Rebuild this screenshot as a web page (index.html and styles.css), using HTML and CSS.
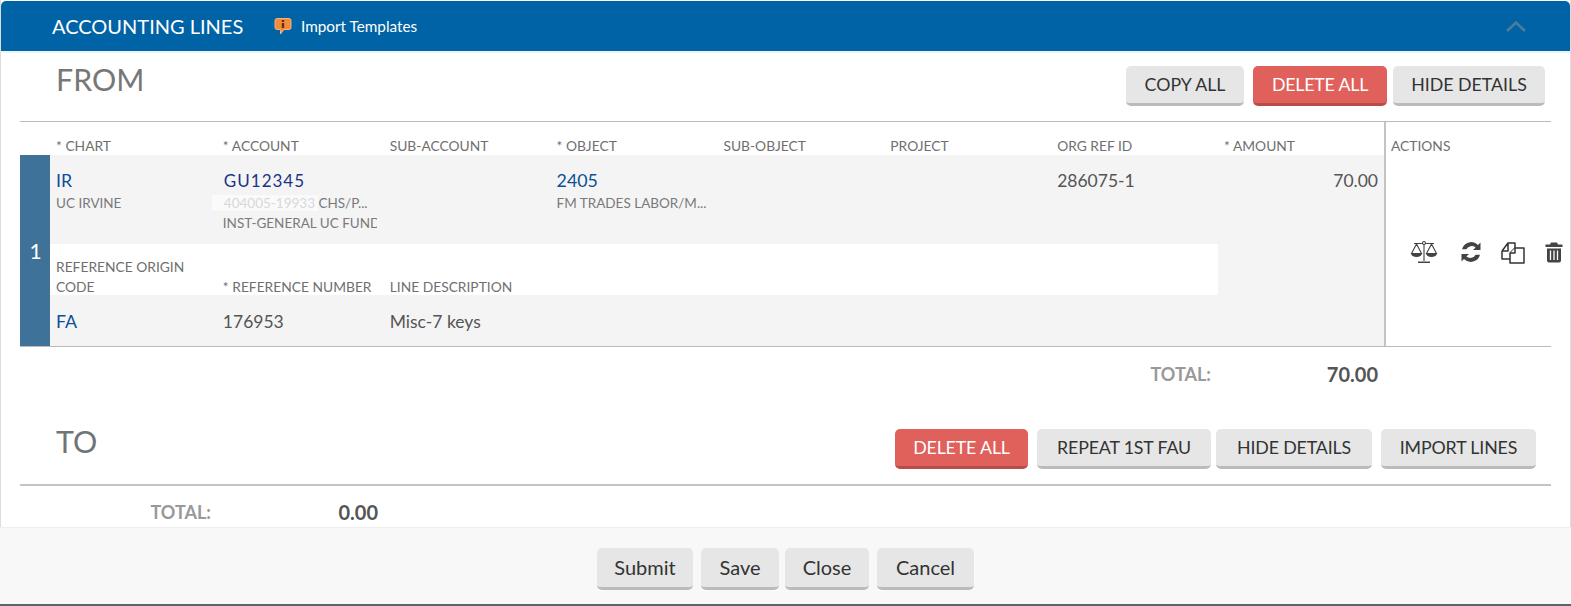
FILE: index.html
```html
<!DOCTYPE html>
<html lang="en">
<head>
<meta charset="utf-8">
<title>Accounting Lines</title>
<link rel="stylesheet" href="styles.css">
</head>
<body>
<div class="page">
  <section class="panel">
    <header class="panel-head">
      <h2 class="panel-title">ACCOUNTING LINES</h2>
      <a class="import-link">
        <svg class="info-icon" viewBox="0 0 18 18" width="18" height="18">
          <path d="M3 1.500h12a2 2 0 0 1 2 2v7a2 2 0 0 1-2 2h-5l-3.500 4.500v-4.500h-3.500a2 2 0 0 1-2-2v-7a2 2 0 0 1 2-2z" fill="#f08c3c" stroke="#f6b27a" stroke-width="1"/>
          <rect x="7.800" y="3" width="2.400" height="2" fill="#6b2f10"/>
          <rect x="7.800" y="6" width="2.400" height="5" fill="#6b2f10"/>
        </svg>
        Import Templates
      </a>
      <svg class="chevron" viewBox="0 0 20 11" width="20" height="11"><path d="M1 10l9-8.500 9 8.500" fill="none" stroke="#4b7c98" stroke-width="2.600"/></svg>
    </header>

    <div class="section-head from-head">
      <h3 class="section-title">FROM</h3>
      <div class="btn-row from-btns">
        <button class="btn w-copy">COPY ALL</button>
        <button class="btn btn-red w-del">DELETE ALL</button>
        <button class="btn w-hide">HIDE DETAILS</button>
      </div>
    </div>

    <div class="lines">
      <div class="lines-main">
        <div class="labels">
          <span>* CHART</span><span>* ACCOUNT</span><span>SUB-ACCOUNT</span><span>* OBJECT</span><span>SUB-OBJECT</span><span>PROJECT</span><span>ORG REF ID</span><span>* AMOUNT</span>
        </div>
        <div class="line">
          <div class="line-num">1</div>
          <div class="fields">
            <div class="fields-top">
              <div class="cell"><a class="link">IR</a><div class="sub">UC IRVINE</div></div>
              <div class="cell">
                <a class="link acct">GU12345</a>
                <div class="sub masked-line"><span class="masked">404005-19933</span> CHS/P...</div>
                <div class="sub clip">INST-GENERAL UC FUND</div>
              </div>
              <div class="cell"></div>
              <div class="cell"><a class="link">2405</a><div class="sub">FM TRADES LABOR/M...</div></div>
              <div class="cell"></div>
              <div class="cell"></div>
              <div class="cell"><span class="val">286075-1</span></div>
            </div>
            <div class="fields-labels">
              <span>REFERENCE ORIGIN CODE</span><span>* REFERENCE NUMBER</span><span>LINE DESCRIPTION</span>
            </div>
            <div class="fields-bottom">
              <div class="cell"><a class="link">FA</a></div>
              <div class="cell"><span class="val">176953</span></div>
              <div class="cell"><span class="val">Misc-7 keys</span></div>
            </div>
          </div>
          <div class="amount"><span class="val">70.00</span></div>
        </div>
      </div>
      <div class="actions">
        <div class="actions-label">ACTIONS</div>
        <div class="action-icons">
          <svg class="ic-scale" viewBox="0 0 28 24" width="28" height="24">
            <g fill="none" stroke="#444" stroke-width="1.100">
              <path d="M14 3v18M4 3.500h20"/>
              <circle cx="14" cy="3" r="1.500" fill="#fff"/>
              <path d="M6.500 4l-5 9.500h10zM21.500 4l-5 9.500h10z"/>
            </g>
            <path d="M1 13.500h11a5.500 3.500 0 0 1-11 0zM16 13.500h11a5.500 3.500 0 0 1-11 0zM8 21.500h12v1.500h-12z" fill="#444"/>
          </svg>
          <svg class="ic-refresh" viewBox="0 0 20 20" width="20" height="20">
            <path d="M19.500 .5v7.500h-7.500l2.600-2.600a6 6 0 0 0-9.200 1.900H1a9.500 9.500 0 0 1 16-4.300zM.5 19.500v-7.500h7.500l-2.600 2.600a6 6 0 0 0 9.200-1.900H19a9.500 9.500 0 0 1-16 4.300z" fill="#444"/>
          </svg>
          <svg class="ic-copy" viewBox="0 0 24 23" width="24" height="23">
            <g fill="#fff" stroke="#333" stroke-width="1.500" stroke-linejoin="round">
              <path d="M1 10l6-8h7v6M1 10v8h8M1 10h6V2"/>
              <path d="M9 12l5-5h9v15H9z"/>
              <path d="M9 12h5V7"/>
            </g>
          </svg>
          <svg class="ic-trash" viewBox="0 0 18 21" width="18" height="21">
            <path d="M6 .5h6l1 2h4.500v2.500H.5V2.500H5zM2 6.500h14v12a2 2 0 0 1-2 2H4a2 2 0 0 1-2-2z" fill="#444"/>
            <path d="M5.500 8.500v9.500M9 8.500v9.500M12.500 8.500v9.500" stroke="#fff" stroke-width="1.300"/>
          </svg>
        </div>
      </div>
    </div>

    <div class="total-row from-total">
      <span class="total-label">TOTAL:</span>
      <span class="total-val w-from-val">70.00</span>
    </div>

    <div class="section-head to-head">
      <h3 class="section-title">TO</h3>
      <div class="btn-row to-btns">
        <button class="btn btn-red btn-narrow w-tdel">DELETE ALL</button>
        <button class="btn btn-narrow w-rep">REPEAT 1ST FAU</button>
        <button class="btn btn-narrow w-thide">HIDE DETAILS</button>
        <button class="btn btn-narrow w-imp">IMPORT LINES</button>
      </div>
    </div>
    <div class="rule"></div>
    <div class="total-row to-total">
      <span class="total-label">TOTAL:</span>
      <span class="total-val w-to-val">0.00</span>
    </div>
  </section>

  <footer class="footer">
    <button class="btn case w-sub">Submit</button>
    <button class="btn case w-save">Save</button>
    <button class="btn case w-close">Close</button>
    <button class="btn case w-can">Cancel</button>
  </footer>
</div>
</body>
</html>
```

FILE: styles.css
```css
* { box-sizing: border-box; }
html, body { margin: 0; padding: 0; background: #fff; }
body { font-family: Lato, "Open Sans", sans-serif; color: #555; }
.page { height: 606px; display: flex; flex-direction: column; overflow: hidden; }

.panel { height: 527px; flex: none; border-left: 1px solid #ddd; border-right: 1px solid #ddd; overflow: hidden; }
.panel-head { height: 50px; margin-top: 1px; background: #0063a5; border-radius: 5px 5px 0 0; display: flex; align-items: center; padding-left: 51px; padding-right: 44px; box-shadow: 0 2px 0 #eef3f6; color: #fff; }
.panel-title { margin: 0; font-size: 20px; font-weight: 400; line-height: 1; width: 222px; }
.import-link { display: flex; align-items: center; gap: 9px; font-size: 15.300px; }
.info-icon { flex: none; }
.chevron { margin-left: auto; }

.section-head { display: flex; justify-content: space-between; padding-left: 55px; }
.section-title { margin: 0; font-weight: 400; font-size: 30.300px; line-height: 36px; color: #777; }
.from-head { height: 70px; padding-top: 10px; padding-right: 25px; }
.from-head .btn-row { margin-top: 5px; }
.to-head { height: 64px; margin-top: 19px; padding-right: 34px; }
.to-head .btn-row { margin-top: 9px; }
.to-head .section-title { margin-top: 3px; color: #6f7478; }

.btn-row { display: flex; }
.from-btns { gap: 8px; }
.to-btns { gap: 8px; }
.btn { height: 40px; border: 0; border-bottom: 3px solid #bbb; border-radius: 5px; background: #e6e6e6; color: #333; font-family: inherit; font-size: 17.800px; padding: 0 0 2px; white-space: nowrap; }
.btn-red { background: #e0605c; border-bottom-color: #b84c48; color: #fff; letter-spacing: -.2px; }
.btn-narrow { letter-spacing: -.15px; }
.case { height: 42px; font-size: 20px; }
.w-copy { width: 118px; margin-right: 1px; }
.w-del { width: 134px; margin-right: -2px; }
.w-hide { width: 152px; }
.w-tdel { width: 133px; margin-right: 1px; }
.w-rep { width: 174px; margin-right: -3px; }
.w-thide { width: 156px; margin-right: 1px; }
.w-imp { width: 155px; }

.lines { margin: 0 19px; display: flex; height: 226px; border-top: 1px solid #bbb; border-bottom: 1px solid #bbb; }
.lines-main { width: 1364px; flex: none; display: flex; flex-direction: column; }
.labels { height: 33px; padding-left: 30px; display: grid; grid-template-columns: repeat(8, 166.860px); align-items: start; font-size: 13.800px; color: #6f6f6f; padding-top: 16px; line-height: 16px; }
.labels span { padding-left: 6px; }
.line { flex: 1; display: flex; min-height: 0; }
.line-num { width: 30px; flex: none; background: #3f7299; color: #fff; font-size: 21px; display: flex; align-items: center; justify-content: center; padding-left: 1px; }
.fields { width: 1168px; flex: none; display: flex; flex-direction: column; }
.fields-top { height: 89px; background: #f4f4f4; display: grid; grid-template-columns: repeat(7, 1fr); }
.fields-labels { height: 51px; background: #fff; display: grid; grid-template-columns: repeat(7, 1fr); align-items: end; font-size: 13.800px; line-height: 20px; color: #6f6f6f; }
.fields-labels span { padding-left: 6px; margin-bottom: -2px; }
.fields-bottom { flex: 1; background: #f4f4f4; display: grid; grid-template-columns: repeat(7, 1fr); }
.fields-bottom .cell { padding-top: 16px; }
.amount { flex: 1; background: #f4f4f4; text-align: right; padding: 15px 6px 0 0; }
.cell { padding: 15px 0 0 6px; min-width: 0; }
.link { display: block; font-size: 17.800px; line-height: 21px; color: #0b4f96; }
.acct { color: #1a3488; font-size: 17px; letter-spacing: 1px; padding-left: 1px; }
.val { font-size: 17.500px; line-height: 21px; color: #555; display: block; }
.sub { font-size: 13.500px; line-height: 20px; color: #7a7a7a; white-space: nowrap; margin-top: 2px; }
.sub + .sub { margin-top: 0; }
.clip { overflow: hidden; width: 154px; }
.masked-line { padding-left: 1px; }
.masked { color: #d8d8d8; background: #fafafa; box-shadow: -12px 0 0 #fafafa, 3px 0 0 #fafafa; }

.actions { flex: 1; border-left: 2px solid #c4c4c4; display: flex; flex-direction: column; }
.actions-label { padding: 16px 0 0 5px; font-size: 13.800px; line-height: 16px; color: #6f6f6f; }
.action-icons { display: flex; align-items: center; margin-top: 86px; padding-left: 24px; }
.ic-scale { margin-right: 23px; }
.ic-refresh { margin-right: 20px; }
.ic-copy { margin-right: 20px; }

.total-row { display: flex; align-items: center; }
.total-label { font-size: 18px; font-weight: 700; color: #999; text-align: right; }
.total-val { font-size: 20px; font-weight: 700; color: #555; text-align: right; }
.from-total { height: 54px; }
.from-total .total-label { width: 1210px; }
.w-from-val { width: 167px; }
.rule { margin: 0 19px; height: 2px; background: #c4c4c4; }
.to-total { height: 41px; padding-top: 11px; }
.to-total .total-label { width: 210px; }
.w-to-val { width: 167px; }

.footer { flex: 1; background: #f8f8f8; border-top: 1px solid #eee; border-bottom: 2px solid #5c6468; display: flex; justify-content: center; align-items: flex-start; padding: 20px 0 0; gap: 8px; }
.w-sub { width: 96px; }
.w-save { width: 78px; margin-right: -2px; }
.w-close { width: 84px; }
.w-can { width: 97px; }
```
